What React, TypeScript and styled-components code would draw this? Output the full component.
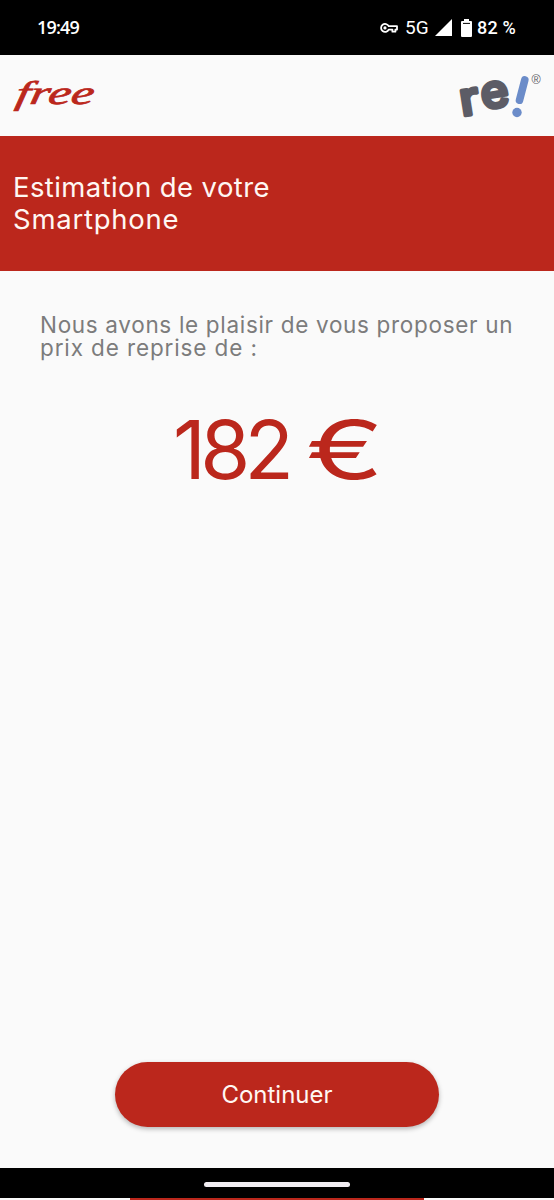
import React from 'react';
import styled, { createGlobalStyle } from 'styled-components';

const RED = '#bb271c';

const GlobalStyle = createGlobalStyle`
  * { box-sizing: border-box; }
  html, body { margin: 0; padding: 0; }
  body {
    background: #fafafa;
    font-family: Inter, "Liberation Sans", sans-serif;
  }
`;

const Screen = styled.div`
  display: flex;
  flex-direction: column;
  width: 554px;
  height: 1200px;
  overflow: hidden;
  background: #fafafa;
`;

const StatusBar = styled.div`
  display: flex;
  align-items: center;
  justify-content: space-between;
  flex: none;
  height: 55px;
  padding: 0 37px;
  background: #000;
  color: #fff;
  font-family: Roboto, "Liberation Sans", sans-serif;
  font-size: 18px;
  font-weight: 500;
  line-height: 55px;
  white-space: nowrap;
`;

const Clock = styled.span`
  font-family: "Open Sans", sans-serif;
  font-weight: 600;
  font-size: 18px;
  letter-spacing: -0.8px;
`;

const StatusIcons = styled.div`
  display: flex;
  align-items: center;
  height: 55px;
  svg { display: block; flex: none; }
`;

const Network = styled.span`
  margin: 0 5px 0 7px;
  font-size: 19px;
  font-weight: 400;
  width: 25px;
`;

const Battery = styled.span`
  margin-left: 5px;
  width: 40px;
  font-size: 18px;
  letter-spacing: 0.2px;
`;

const Header = styled.header`
  display: flex;
  align-items: center;
  justify-content: space-between;
  flex: none;
  height: 81px;
  padding: 0 10px;
  svg { display: block; overflow: visible; }
`;

const Banner = styled.section`
  flex: none;
  height: 135px;
  padding: 35px 13px 0 13px;
  background: ${RED};
`;

const Title = styled.h1`
  margin: 0;
  color: #fff7f3;
  font-size: 27.5px;
  font-weight: 400;
  line-height: 32px;
  white-space: nowrap;
`;

const Line = styled.span<{ $spacing: number }>`
  display: block;
  letter-spacing: ${(p) => p.$spacing}px;
`;

const Content = styled.main`
  display: flex;
  flex-direction: column;
  flex: 1;
  align-items: center;
  padding: 42px 0 41px;
`;

const Intro = styled.p`
  align-self: flex-start;
  margin: 0 0 0 40px;
  color: #7c7c7c;
  font-size: 22.5px;
  font-weight: 400;
  line-height: 23px;
  white-space: nowrap;
`;

const Price = styled.div`
  display: flex;
  align-items: center;
  align-self: flex-start;
  margin: 41px 0 0 173px;
  height: 100px;
  color: ${RED};
  font-size: 81px;
  line-height: 100px;
  white-space: pre;
`;

const Amount = styled.span`
  width: 133px;
  letter-spacing: -5.8px;
`;

const Currency = styled.span`
  display: inline-block;
  transform: scaleX(1.44);
  transform-origin: left center;
`;

const Continue = styled.button`
  margin-top: auto;
  width: 324px;
  height: 65px;
  padding: 0;
  border: 0;
  border-radius: 33px;
  background: ${RED};
  box-shadow: 0 2px 5px rgba(0, 0, 0, 0.28);
  color: #fff7f3;
  font-family: inherit;
  font-size: 24px;
  line-height: 65px;
`;

const NavBar = styled.div`
  display: flex;
  align-items: center;
  justify-content: center;
  flex: none;
  height: 30px;
  padding-top: 3px;
  background: #000;
`;

const Handle = styled.div`
  width: 146px;
  height: 5px;
  border-radius: 3px;
  background: #f1edf2;
`;

const BottomEdge = styled.div`
  flex: none;
  height: 2px;
  margin: 0 130px;
  background: ${RED};
`;

function KeyIcon() {
  return (
    <svg width="18" height="12" viewBox="0 0 18 12" fill="none" stroke="#fff" strokeWidth="1.8">
      <path d="M8.7 4.2H17v3.4h-1.6v2.1h-3V7.6H8.7A4 4 0 1 1 8.7 4.2Z" strokeLinejoin="round" />
      <circle cx="5" cy="5.9" r="1.6" fill="#fff" stroke="none" />
    </svg>
  );
}

function SignalIcon() {
  return (
    <svg width="17" height="17" viewBox="0 0 17 17">
      <path d="M17 0V17H0Z" fill="#fff" />
    </svg>
  );
}

const BatterySvg = styled.svg`
  margin-left: 9px;
`;

function BatteryIcon() {
  return (
    <BatterySvg width="11" height="18" viewBox="0 0 11 18">
      <path d="M3 0h5v2H10a1 1 0 0 1 1 1V17a1 1 0 0 1-1 1H1a1 1 0 0 1-1-1V3a1 1 0 0 1 1-1H3Z" fill="#fff" />
      <path d="M2 4.4h7" stroke="#000" strokeWidth="1" />
    </BatterySvg>
  );
}

function FreeLogo() {
  return (
    <svg width="92" height="46" viewBox="10 72 92 46" role="img" aria-label="free">
      <text
        transform="translate(14.5 102.5) skewX(-10) scale(1.56 1)"
        fontFamily="Liberation Serif, serif"
        fontStyle="italic"
        fontWeight="400"
        fontSize="33"
        fill={RED}
        stroke={RED}
        strokeWidth="0.7"
      >
        free
      </text>
    </svg>
  );
}

function ReLogo() {
  const letter = {
    fontFamily: 'Inter, sans-serif',
    fontWeight: 500,
    fontSize: 46,
    fill: '#5c5c66',
    stroke: '#5c5c66',
    strokeWidth: 3.8,
    strokeLinejoin: 'round' as const,
  };
  return (
    <svg width="90" height="54" viewBox="454 68 90 54" role="img" aria-label="re!">
      <text transform="translate(462 115) rotate(-9) scale(1.08 1)" {...letter}>r</text>
      <text transform="translate(483 108.5) rotate(-9) scale(1.03 1)" {...letter}>e</text>
      <path d="M524.8 79 519.5 99.2" stroke="#6b8cc9" strokeWidth="7.6" strokeLinecap="round" />
      <circle cx="517" cy="111.5" r="4.7" fill="#6b8cc9" />
      <text x="531.5" y="83" fontFamily="Liberation Sans, sans-serif" fontSize="12.5" fill="#5c5c66">®</text>
    </svg>
  );
}

export default function App() {
  return (
    <>
      <GlobalStyle />
      <Screen>
        <StatusBar>
          <Clock>19:49</Clock>
          <StatusIcons>
            <KeyIcon />
            <Network>5G</Network>
            <SignalIcon />
            <BatteryIcon />
            <Battery>82 %</Battery>
          </StatusIcons>
        </StatusBar>
        <Header>
          <FreeLogo />
          <ReLogo />
        </Header>
        <Banner>
          <Title>
            <Line $spacing={0.4}>Estimation de votre</Line>
            <Line $spacing={0.75}>Smartphone</Line>
          </Title>
        </Banner>
        <Content>
          <Intro>
            <Line $spacing={0.68}>Nous avons le plaisir de vous proposer un</Line>
            <Line $spacing={0.88}>prix de reprise de :</Line>
          </Intro>
          <Price>
            <Amount>182 </Amount>
            <Currency>€</Currency>
          </Price>
          <Continue>Continuer</Continue>
        </Content>
        <NavBar><Handle /></NavBar>
        <BottomEdge />
      </Screen>
    </>
  );
}
